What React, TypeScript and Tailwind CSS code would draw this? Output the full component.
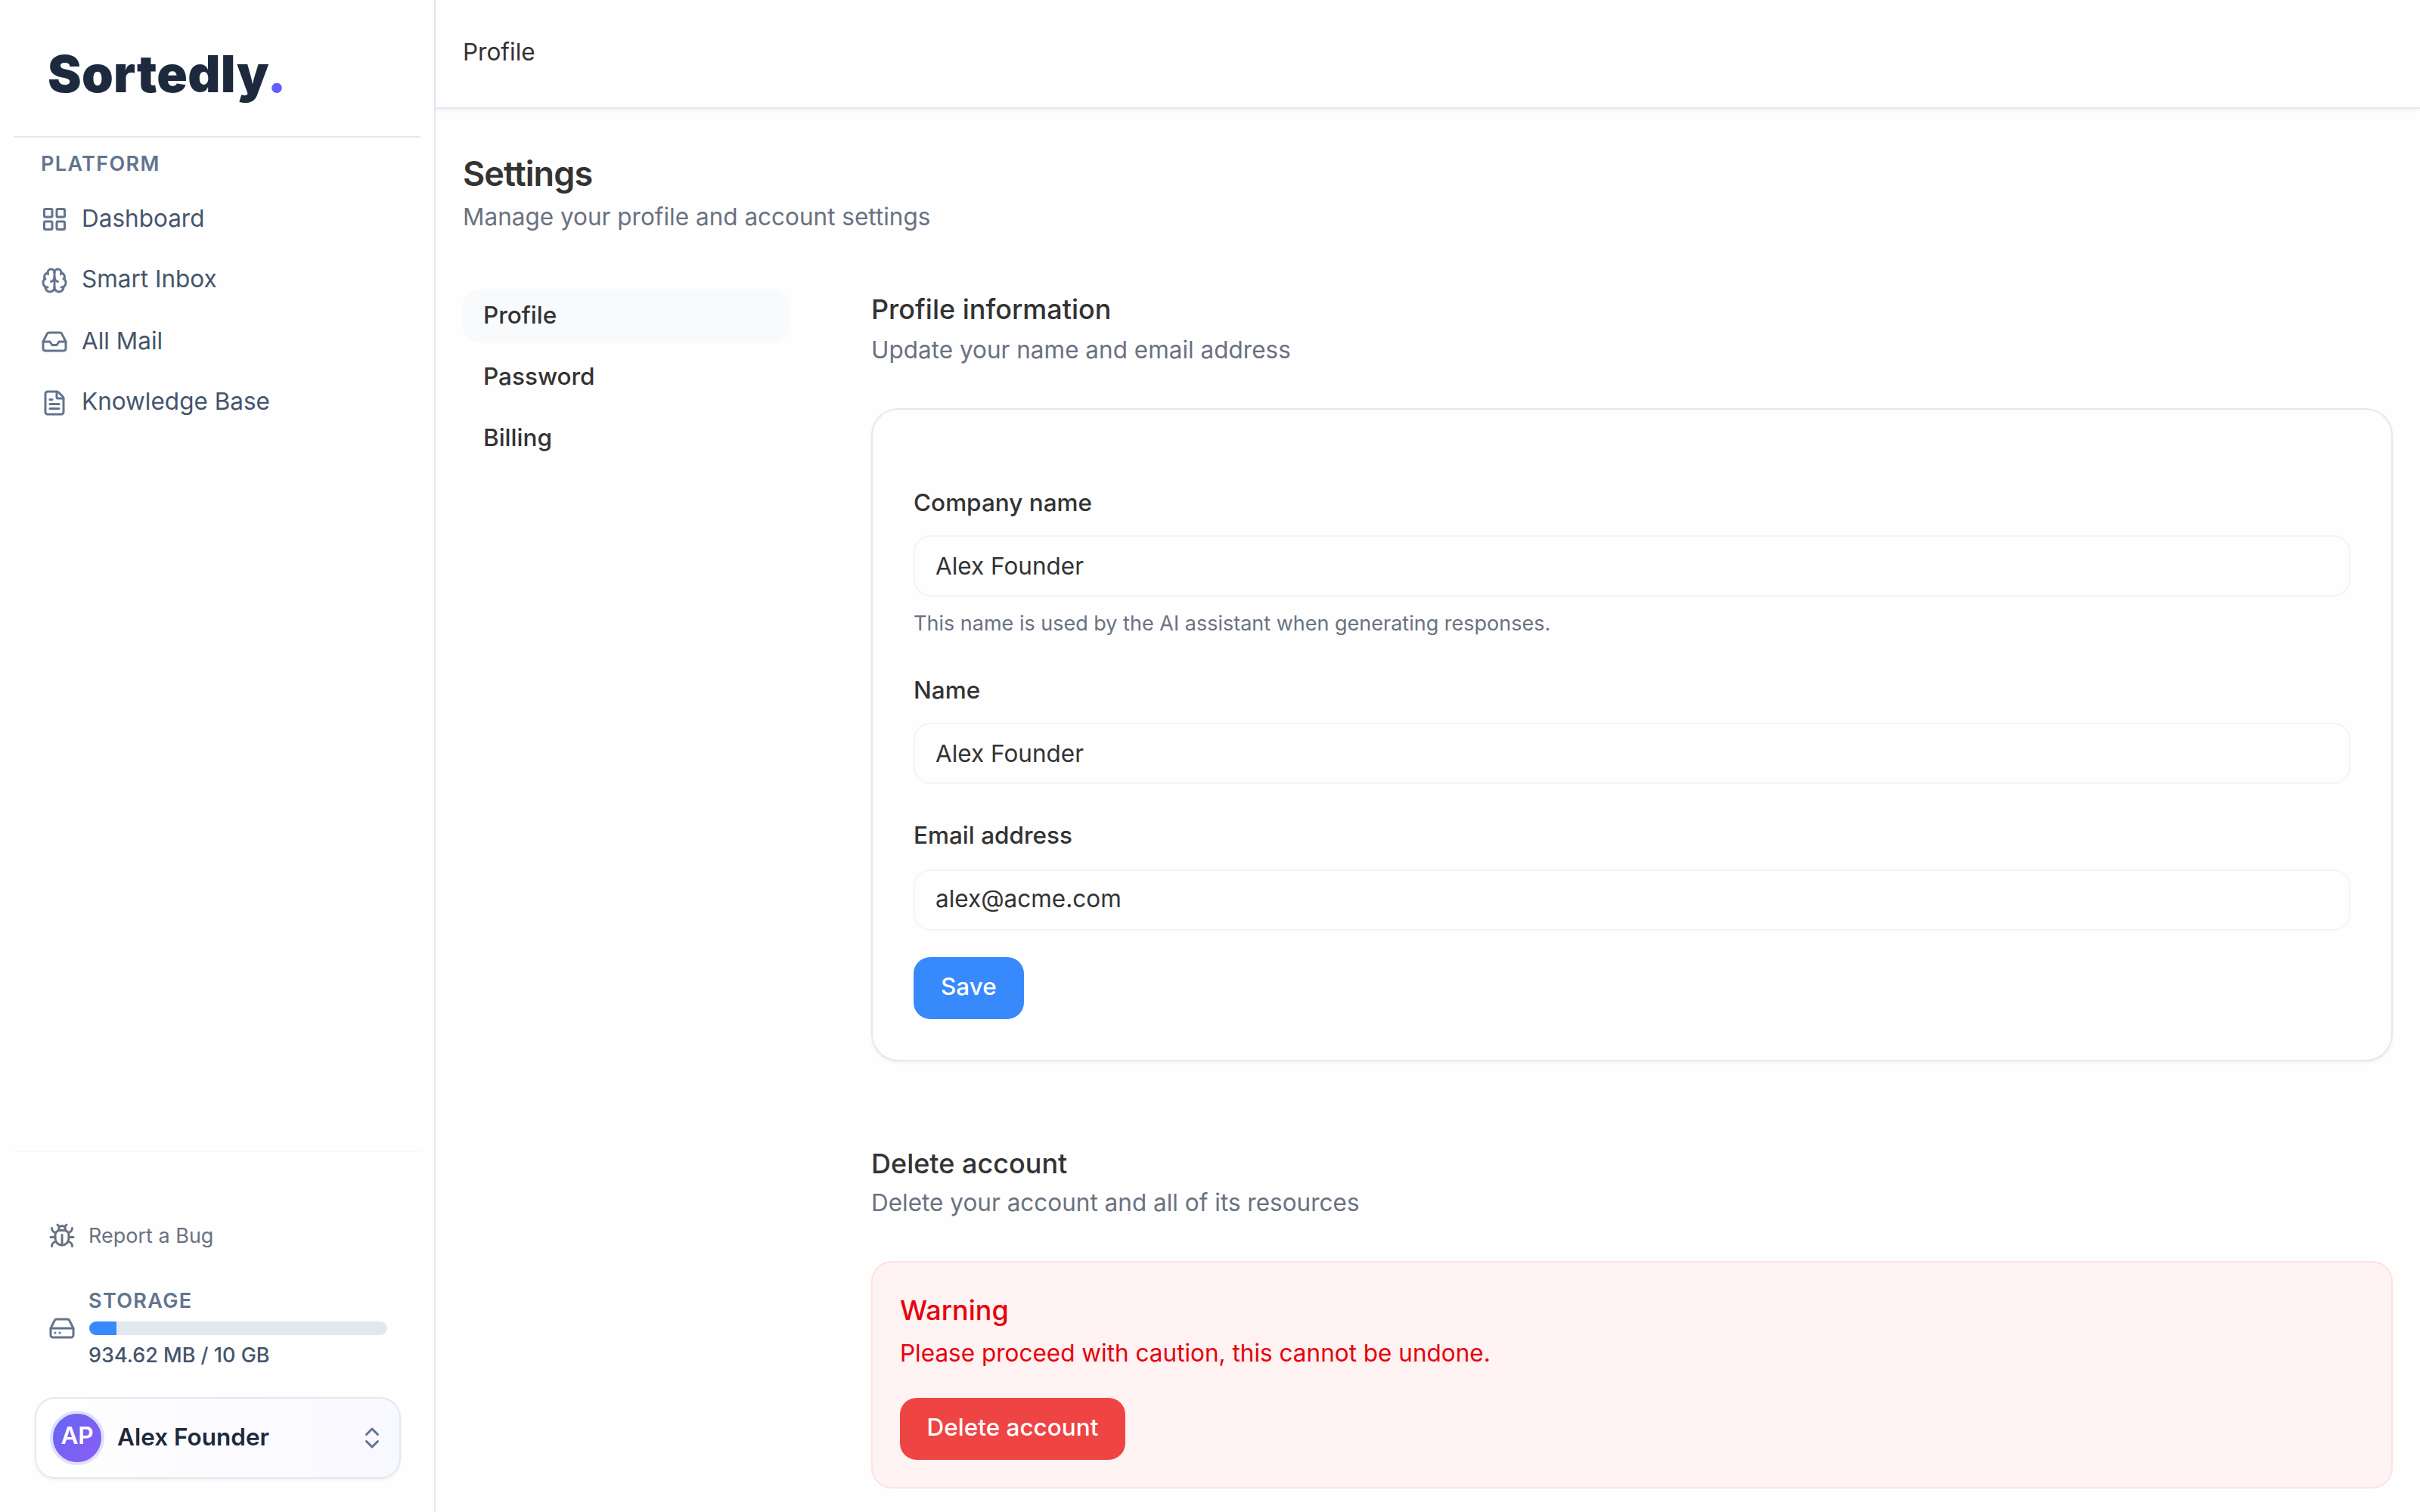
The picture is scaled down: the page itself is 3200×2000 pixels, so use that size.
import type { ReactNode } from "react";
import { Brain, Bug, ChevronsUpDown, FileText, HardDrive, Inbox, LayoutGrid } from "lucide-react";

const navItems = [
  { title: "Dashboard", icon: LayoutGrid },
  { title: "Smart Inbox", icon: Brain },
  { title: "All Mail", icon: Inbox },
  { title: "Knowledge Base", icon: FileText },
];

const settingsTabs = [
  { title: "Profile", active: true },
  { title: "Password", active: false },
  { title: "Billing", active: false },
];

const storage = { used: "934.62 MB", total: "10 GB", percent: 9.13 };

function Sidebar() {
  return (
    <aside className="flex h-full w-[576px] shrink-0 flex-col border-r-2 border-slate-200 px-[18px]">
      <div className="flex h-[182px] items-center border-b-2 border-slate-200 px-[45px] pt-[14px]">
        <span className="text-[67px] leading-none font-black tracking-[0.3px] text-slate-800">
          Sortedly<span className="text-indigo-500">.</span>
        </span>
      </div>

      <div className="px-[18px]">
        <p className="flex h-[72px] items-center px-[18px] pb-[2px] text-[27px] font-semibold tracking-wider text-slate-500">
          PLATFORM
        </p>
        <nav className="flex flex-col gap-[9px]">
          {navItems.map((item) => (
            <a key={item.title} className="group flex h-[72px] items-center gap-[18px] px-[18px]">
              <item.icon className="text-slate-500" size={36} />
              <span className="pb-[3px] text-[31.5px] leading-[40px] text-slate-600 group-even:pb-[5px]">
                {item.title}
              </span>
            </a>
          ))}
        </nav>
      </div>

      <div className="mt-auto border-t-2 border-[#f8f9fb] px-[28px] pt-[75px] pb-[44px]">
        <a className="flex h-[72px] items-center gap-[17px] px-[18px] text-gray-500">
          <Bug size={36} />
          <span className="text-[27px] leading-[36px]">Report a Bug</span>
        </a>

        <div className="mt-[32px] flex items-center gap-[17px] pr-[16px] pl-[18px]">
          <HardDrive className="shrink-0 text-slate-500" size={36} />
          <div className="flex-1">
            <p className="text-[27px] leading-[36px] font-semibold tracking-wider text-slate-500">STORAGE</p>
            <div className="mt-[9px] ml-px h-[18px] overflow-hidden rounded-full bg-slate-200">
              <div className="h-full bg-[#388afc]" style={{ width: `${storage.percent}%` }} />
            </div>
            <p className="mt-[9px] text-[27px] leading-[36px] font-medium text-slate-600">
              {storage.used} / {storage.total}
            </p>
          </div>
        </div>

        <button className="mt-[37px] flex h-[108px] w-[484px] items-center rounded-[27px] border-2 border-slate-200 bg-linear-to-r from-white to-[#f8f8ff] px-[18px] shadow-[0_2px_4px_rgba(0,0,0,0.05)]">
          <span className="flex size-[72px] items-center justify-center rounded-full border-4 border-[#e0e0fd] bg-linear-to-br from-[#6366f1] to-[#8b5cf6] pb-[6px] text-[31.5px] font-semibold text-white">
            AP
          </span>
          <span className="ml-[17px] pb-[3px] text-[31.5px] font-semibold text-slate-800">Alex Founder</span>
          <ChevronsUpDown className="ml-auto text-slate-500" size={36} />
        </button>
      </div>
    </aside>
  );
}

function SectionHeading({ title, children }: { title: string; children: ReactNode }) {
  return (
    <header>
      <h3 className="text-[36px] leading-[54px] font-medium">{title}</h3>
      {children}
    </header>
  );
}

function Field({ label, value, hint, className = "" }: { label: string; value: string; hint?: string; className?: string }) {
  return (
    <div className={`flex flex-col ${className}`}>
      <label className="text-[31.5px] leading-[32px] font-medium">{label}</label>
      <input
        className="mt-[27px] h-[81px] w-full rounded-[22px] border-2 border-slate-100 px-[27px] text-[31.5px]"
        defaultValue={value}
      />
      {hint && <p className="mt-[18px] text-[27px] leading-[36px] text-gray-500">{hint}</p>}
    </div>
  );
}

export default function App() {
  return (
    <div className="flex h-[2000px] w-[3200px] overflow-hidden bg-[#fefefe] font-['Inter',sans-serif] text-[#333333]">
      <Sidebar />

      <main className="flex-1">
        <div className="flex h-[144px] items-center border-b-2 border-slate-200 px-[36px] pb-[5px] text-[31.5px] shadow-[0_2px_4px_rgba(0,0,0,0.05)]">
          Profile
        </div>

        <div className="px-[36px] pt-[56px]">
          <h2 className="text-[45px] leading-[60px] font-semibold tracking-[-0.02em]">Settings</h2>
          <p className="text-[31.5px] leading-[54px] text-gray-500">Manage your profile and account settings</p>

          <div className="mt-[68px] flex gap-[108px]">
            <nav className="flex w-[432px] flex-col gap-[9px]">
              {settingsTabs.map((tab) => (
                <a
                  key={tab.title}
                  className={`flex h-[72px] items-center rounded-[22px] px-[27px] pb-[3px] text-[31.5px] font-medium ${
                    tab.active ? "bg-slate-50" : ""
                  }`}
                >
                  {tab.title}
                </a>
              ))}
            </nav>

            <div className="flex-1">
              <SectionHeading title="Profile information">
                <p className="mt-[3px] text-[31.5px] leading-[47px] text-gray-500">Update your name and email address</p>
              </SectionHeading>

              <form className="mt-[54px] flex h-[864px] flex-col gap-[54px] rounded-[36px] border-2 border-slate-200 px-[54px] pt-[107px] shadow-[0_2px_4px_rgba(0,0,0,0.05)]">
                <Field
                  label="Company name"
                  value="Alex Founder"
                  hint="This name is used by the AI assistant when generating responses."
                />
                <Field label="Name" value="Alex Founder" />
                <Field
                  label="Email address"
                  value="alex@acme.com"
                  className="-mt-[2px] [&>input]:mt-[29px] [&>input]:pb-[4px]"
                />
                <button className="-mt-[19px] h-[82px] self-start rounded-[22px] bg-[#388afc] px-[36px] pb-[5px] text-[31.5px] font-medium text-white">
                  Save
                </button>
              </form>

              <div className="mt-[108px]">
                <SectionHeading title="Delete account">
                  <p className="mt-px text-[31.5px] leading-[47px] text-gray-500">
                    Delete your account and all of its resources
                  </p>
                </SectionHeading>
                <div className="mt-[54px] rounded-[27px] border-2 border-red-100 bg-red-50 p-[36px] text-red-600">
                  <p className="text-[36px] leading-[54px] font-medium">Warning</p>
                  <p className="mt-[3px] text-[31.5px] leading-[54px]">
                    Please proceed with caution, this cannot be undone.
                  </p>
                  <button className="mt-[32px] h-[82px] w-[298px] rounded-[22px] bg-[#ef4444] pb-[5px] text-[31.5px] font-medium text-white">
                    Delete account
                  </button>
                </div>
              </div>
            </div>
          </div>
        </div>
      </main>
    </div>
  );
}
